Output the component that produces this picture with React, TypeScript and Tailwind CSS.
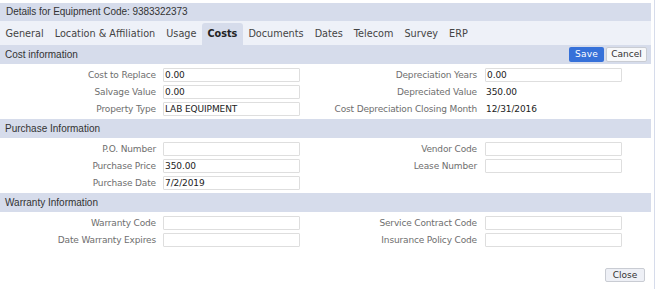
import React from "react";

const ARIAL = { fontFamily: '"Liberation Sans", Arial, sans-serif' };
const VERD = { fontFamily: '"DejaVu Sans", Verdana, sans-serif' };

function Field({
  label,
  value,
  plain,
  labelW,
  gap,
}: {
  label?: string;
  value?: string;
  plain?: boolean;
  labelW: string;
  gap: string;
}) {
  return (
    <div className="flex items-center h-[14px]">
      <div className={`${labelW} text-right text-[9px] text-[#6e6e6e] tracking-[-0.15px] leading-none whitespace-nowrap`}>
        {label ?? ""}
      </div>
      {label === undefined ? null : plain ? (
        <div className={`${gap} pl-[1px] text-[9px] text-[#222] tracking-[-0.1px] leading-none`}>{value}</div>
      ) : (
        <div className={gap}>
          <div className="w-[137px] h-[14px] border border-[#dedede] rounded-[1px] bg-white flex items-center pl-[1px] text-[9px] text-[#222] tracking-[-0.1px] leading-none">
            {value ?? ""}
          </div>
        </div>
      )}
    </div>
  );
}

type Cell = { label?: string; value?: string; plain?: boolean };

function Row({ left, right }: { left: Cell; right: Cell }) {
  return (
    <div className="flex h-[17px] items-start">
      <div className="w-[300px]">
        <Field {...left} labelW="w-[157px]" gap="ml-[7px]" />
      </div>
      <div>
        <Field {...right} labelW="w-[177px]" gap="ml-[8px]" />
      </div>
    </div>
  );
}

function SectionBar({ title, buttons }: { title: string; buttons?: boolean }) {
  return (
    <div className="h-[19px] bg-[#d6dceb] flex items-center justify-between pl-[5px] pr-[4px]">
      <span style={ARIAL} className="text-[10px] text-[#333] leading-none">
        {title}
      </span>
      {buttons && (
        <div className="flex items-center gap-[2px]" style={VERD}>
          <div className="w-[35px] h-[15px] rounded-[2px] bg-[#3671d9] text-white text-[9px] tracking-[0.2px] flex items-center justify-center leading-none">
            Save
          </div>
          <div className="w-[41px] h-[15px] rounded-[2px] bg-[#f7f8fa] border border-[#c9ccd3] text-[#333] text-[9px] flex items-center justify-center leading-none">
            Cancel
          </div>
        </div>
      )}
    </div>
  );
}

export default function App() {
  const tabs = ["General", "Location & Affiliation", "Usage", "Costs", "Documents", "Dates", "Telecom", "Survey", "ERP"];
  return (
    <div className="w-[655px] h-[289px] bg-white flex overflow-hidden" style={VERD}>
      <div className="w-[651px] pt-[3px] flex flex-col">
        <div className="h-[18px] bg-[#d6dceb] flex items-center pl-[6px]">
          <span style={ARIAL} className="text-[10px] text-[#333] leading-none tracking-[-0.05px]">
            Details for Equipment Code: 9383322373
          </span>
        </div>
        <div className="h-[24px] bg-[#eef1f8] flex items-end">
          {tabs.map((t) => (
            <div
              key={t}
              className={`h-[22px] px-[5.5px] flex items-center text-[9.7px] leading-none rounded-t-[3px] ${
                t === "Costs" ? "bg-[#d6dceb] font-bold text-[#222]" : "text-[#444]"
              }`}
            >
              {t}
            </div>
          ))}
        </div>
        <SectionBar title="Cost information" buttons />
        <div className="pt-[4px]">
          <Row left={{ label: "Cost to Replace", value: "0.00" }} right={{ label: "Depreciation Years", value: "0.00" }} />
          <Row left={{ label: "Salvage Value", value: "0.00" }} right={{ label: "Depreciated Value", value: "350.00", plain: true }} />
          <Row
            left={{ label: "Property Type", value: "LAB EQUIPMENT" }}
            right={{ label: "Cost Depreciation Closing Month", value: "12/31/2016", plain: true }}
          />
        </div>
        <SectionBar title="Purchase Information" />
        <div className="pt-[4px]">
          <Row left={{ label: "P.O. Number" }} right={{ label: "Vendor Code" }} />
          <Row left={{ label: "Purchase Price", value: "350.00" }} right={{ label: "Lease Number" }} />
          <Row left={{ label: "Purchase Date", value: "7/2/2019" }} right={{}} />
        </div>
        <SectionBar title="Warranty Information" />
        <div className="pt-[4px]">
          <Row left={{ label: "Warranty Code" }} right={{ label: "Service Contract Code" }} />
          <Row left={{ label: "Date Warranty Expires" }} right={{ label: "Insurance Policy Code" }} />
        </div>
        <div className="flex justify-end pr-[6px] mt-[18px]">
          <div className="w-[40px] h-[14px] rounded-[2px] bg-[#eef0f6] border border-[#c9ccd3] text-[#333] text-[9px] flex items-center justify-center leading-none">
            Close
          </div>
        </div>
      </div>
      <div className="w-[3px]" />
      <div className="w-px bg-[#d6dceb]" />
    </div>
  );
}
